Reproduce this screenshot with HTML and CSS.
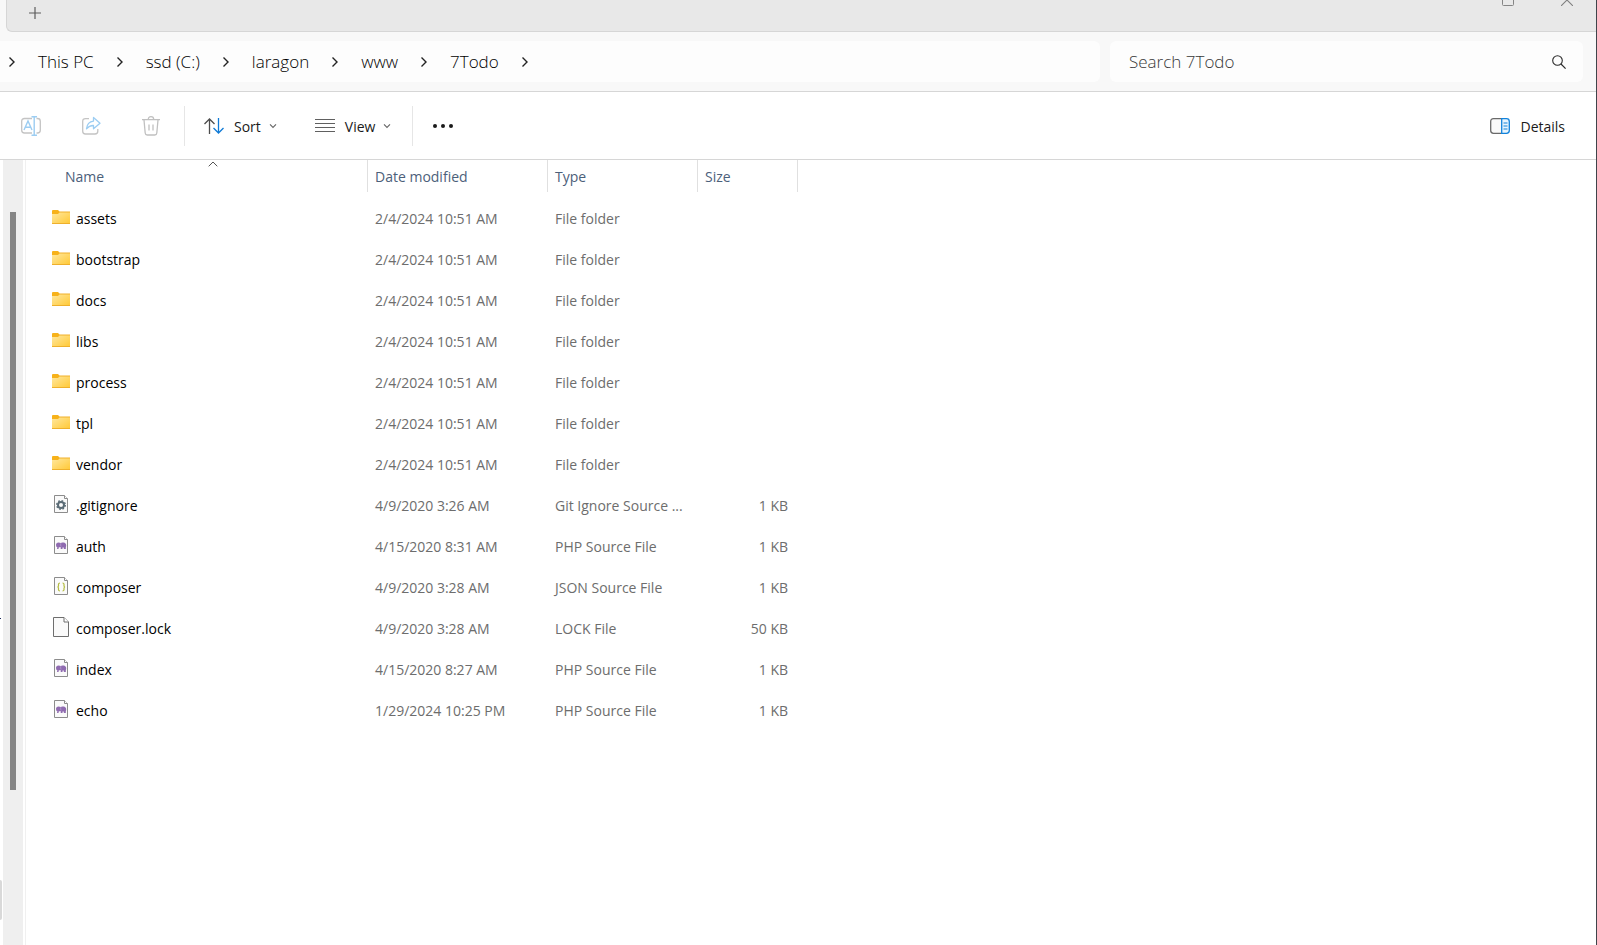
FILE: index.html
```html
<!DOCTYPE html>
<html lang="en">
<head>
<meta charset="utf-8">
<title>7Todo</title>
<link rel="stylesheet" href="styles.css">
</head>
<body>
<svg class="defs" aria-hidden="true">
  <defs>
    <linearGradient id="folder-fill" x1="0" y1="0" x2="1" y2="1">
      <stop offset="0" stop-color="#ffe8a0"/>
      <stop offset="1" stop-color="#ffc937"/>
    </linearGradient>
    <symbol id="chevron" viewBox="0 0 8 12"><path d="M1.5 1.5 6 6l-4.5 4.5" fill="none" stroke="#222" stroke-width="1.4"/></symbol>
    <symbol id="caret" viewBox="0 0 8 6"><path d="M1 1.3 4 4.4l3-3.1" fill="none" stroke="#666" stroke-width="1.1"/></symbol>
    <symbol id="folder" viewBox="0 0 20 20">
      <path d="M1 4q0-1 1-1h5l2 2v3H1z" fill="#f7b21a"/>
      <path d="M1 7h6l2-2h10v11.500H1z" fill="url(#folder-fill)"/>
      <path d="M8.500 5H19" stroke="#f0b02a"/>
      <path d="M1 16.500h18" stroke="#eeb02c"/>
    </symbol>
    <symbol id="page" viewBox="0 0 20 20">
      <path d="M3.500 1.500h10l3 3v14h-13z" fill="#fafafa" stroke="#8c8c8c"/>
      <path d="M13.500 1.500v3h3" fill="#fff" stroke="#8c8c8c"/>
    </symbol>
    <symbol id="blank" viewBox="0 0 20 20">
      <path d="M2.500.500h10.500l4.500 4.500v14.500h-15z" fill="#fafafa" stroke="#6e6e6e"/>
      <path d="M13 .500v4.500h4.500" fill="#fff" stroke="#6e6e6e"/>
    </symbol>
    <symbol id="git" viewBox="0 0 20 20">
      <use href="#page"/>
      <circle cx="10" cy="11" r="4.300" fill="none" stroke="#5a6b75" stroke-width="1.400" stroke-dasharray="1.700 1.677"/>
      <circle cx="10" cy="11" r="3" fill="none" stroke="#5a6b75" stroke-width="2"/>
    </symbol>
    <symbol id="php" viewBox="0 0 20 20">
      <use href="#page"/>
      <path d="M5 10q0-2.500 2.500-2.500 1.500 0 2.200.500 1-.800 2.800-.500 2.700.300 2.700 3 0 1-.400 1.500v2h-2v-1.500h-1.300v1.500H9.700v-2q-1 .500-1.900.200l-.300 1.800q-1.500.300-1.500-.800l.400-1Q5 12.200 5 10z" fill="#8f6bb0"/>
      <path d="M9.800 8.200q-.400 1.800.200 3.300" fill="none" stroke="#c3acd8" stroke-width=".6"/>
    </symbol>
    <symbol id="json" viewBox="0 0 20 20">
      <use href="#page"/>
      <path d="M9 7q-1.500 0-1.500 1.200v1.500q0 1.300-1.100 1.300 1.100 0 1.100 1.300v1.500Q7.500 15 9 15M11.500 7q1.500 0 1.500 1.200v1.500q0 1.300 1.100 1.300-1.100 0-1.100 1.300v1.500q0 1.200-1.500 1.200" fill="none" stroke="#b4bb40" stroke-width="1.200"/>
    </symbol>
  </defs>
</svg>

<div class="window">
  <header class="titlebar">
    <div class="tabstrip">
      <button class="tab-new" aria-label="New tab"><svg width="12" height="12" viewBox="0 0 12 12"><path d="M6 0v12M0 6h12" stroke="#5c5c5c" stroke-width="1.200"/></svg></button>
      <div class="caption">
        <button class="caption-button" aria-label="Maximize"><svg width="12" height="12" viewBox="0 0 12 12"><rect x=".5" y=".5" width="11" height="11" rx="1" fill="none" stroke="#858585"/></svg></button>
        <button class="caption-button" aria-label="Close"><svg width="12" height="12" viewBox="0 0 12 12"><path d="M0 0l12 12M12 0 0 12" stroke="#808080" stroke-width="1.100"/></svg></button>
      </div>
    </div>
  </header>

  <div class="addressbar">
    <nav class="breadcrumb" aria-label="Path">
      <svg class="chevron"><use href="#chevron"/></svg>
      <button class="crumb">This PC</button>
      <svg class="chevron"><use href="#chevron"/></svg>
      <button class="crumb">ssd (C:)</button>
      <svg class="chevron"><use href="#chevron"/></svg>
      <button class="crumb">laragon</button>
      <svg class="chevron"><use href="#chevron"/></svg>
      <button class="crumb">www</button>
      <svg class="chevron"><use href="#chevron"/></svg>
      <button class="crumb">7Todo</button>
      <svg class="chevron"><use href="#chevron"/></svg>
    </nav>
    <form class="search">
      <input class="search-input" type="text" placeholder="Search 7Todo" aria-label="Search 7Todo">
      <button class="search-button" type="button" aria-label="Search"><svg width="14" height="14" viewBox="0 0 14 14"><circle cx="5.500" cy="5.500" r="4.800" fill="none" stroke="#2b2b2b" stroke-width="1.100"/><path d="M9 9l4.600 4.600" stroke="#2b2b2b" stroke-width="1.200"/></svg></button>
    </form>
  </div>

  <div class="toolbar">
    <div class="tool-icons">
      <button class="tool" disabled aria-label="Rename"><svg width="20" height="20" viewBox="0 0 20 20" fill="none">
        <path d="M11 2.500H3.500Q.700 2.500.700 5.200v9.100q0 2.700 2.800 2.700H11M15.500 2.500h1q2.800 0 2.800 2.700v9.100q0 2.700-2.800 2.700h-1" stroke="#c4c4c4" stroke-width="1.300"/>
        <path d="M3 14 7 5l4 9M4.500 11.300h5" stroke="#9ccdf2" stroke-width="1.400"/>
        <path d="M13.200 1v18M10.500.700h5.500M10.500 19.300h5.500" stroke="#9ccdf2" stroke-width="1.400"/></svg></button>
      <button class="tool" disabled aria-label="Share"><svg width="20" height="20" viewBox="0 0 20 20" fill="none">
        <path d="M8 2.600H4.500Q1.700 2.600 1.700 5.400v9.800q0 2.800 2.800 2.800h9.500q2.800 0 2.800-2.800V13" stroke="#c4c4c4" stroke-width="1.300"/>
        <path d="M12.500 1.500 19 7.300l-6.500 5.500V9.500q-4-.200-7 3.300.7-7 7-7.700z" stroke="#9ccdf2" stroke-width="1.300" stroke-linejoin="round"/></svg></button>
      <button class="tool" disabled aria-label="Delete"><svg width="20" height="20" viewBox="0 0 20 20" fill="none" stroke="#c0c0c0" stroke-width="1.300">
        <path d="M1 3.700h18M7.300 3.500q0-2.800 2.700-2.800t2.700 2.800M3 4l1.200 13q.200 2 2 2h7.600q1.800 0 2-2L17 4M8 8.500v6M12 8.500v6"/></svg></button>
    </div>
    <div class="tool-menus">
      <button class="menu"><svg width="20" height="16" viewBox="0 0 20 16" fill="none">
        <path d="M5.500 16V1M.500 6l5-5 5 5" stroke="#4d4d4d" stroke-width="1.300"/>
        <path d="M14.500 0v15M9.500 10l5 5 5-5" stroke="#0f7ad6" stroke-width="1.300"/></svg><span class="menu-label">Sort</span><svg class="caret"><use href="#caret"/></svg></button>
      <button class="menu"><svg width="20" height="14" viewBox="0 0 20 14"><path d="M0 .500h20M0 4.500h20M0 8.500h20M0 12.500h20" stroke="#606060"/></svg><span class="menu-label">View</span><svg class="caret"><use href="#caret"/></svg></button>
    </div>
    <button class="more" aria-label="See more"><svg width="20" height="4" viewBox="0 0 20 4" fill="#1a1a1a"><circle cx="2" cy="2" r="2"/><circle cx="10" cy="2" r="2"/><circle cx="18" cy="2" r="2"/></svg></button>
    <button class="menu details"><svg width="20" height="16" viewBox="0 0 20 16" fill="none">
      <path d="M12 .700H3.500Q.700.700.700 3.500v9q0 2.800 2.800 2.800H12" fill="#fafafa" stroke="#6a6a6a" stroke-width="1.300"/>
      <path d="M11.700.700h4.800q2.800 0 2.800 2.800v9q0 2.800-2.800 2.800h-4.800z" fill="#e8f4fd" stroke="#1283dc" stroke-width="1.300"/>
      <path d="M13.500 5h4M13.500 8h4M13.500 11h4" stroke="#1283dc" stroke-width="1.200"/></svg><span class="menu-label">Details</span></button>
  </div>

  <main class="content">
    <aside class="navpane">
      <div class="nav-edge"><span class="nav-mark"></span><span class="nav-item"></span></div>
      <div class="scroll-track"><div class="scroll-thumb"></div></div>
    </aside>
    <table class="files">
      <colgroup><col class="col-name"><col class="col-date"><col class="col-type"><col class="col-size"></colgroup>
      <thead>
        <tr>
          <th scope="col"><div class="head head-name">Name<svg class="sort-mark" width="10" height="6" viewBox="0 0 10 6"><path d="M.700 5.300 5 1l4.300 4.300" fill="none" stroke="#555" stroke-width="1"/></svg></div></th>
          <th scope="col"><div class="head">Date modified</div></th>
          <th scope="col"><div class="head">Type</div></th>
          <th scope="col"><div class="head">Size</div></th>
        </tr>
      </thead>
      <tbody>
        <tr><td><div class="file"><svg class="icon"><use href="#folder"/></svg>assets</div></td><td>2/4/2024 10:51 AM</td><td>File folder</td><td></td></tr>
        <tr><td><div class="file"><svg class="icon"><use href="#folder"/></svg>bootstrap</div></td><td>2/4/2024 10:51 AM</td><td>File folder</td><td></td></tr>
        <tr><td><div class="file"><svg class="icon"><use href="#folder"/></svg>docs</div></td><td>2/4/2024 10:51 AM</td><td>File folder</td><td></td></tr>
        <tr><td><div class="file"><svg class="icon"><use href="#folder"/></svg>libs</div></td><td>2/4/2024 10:51 AM</td><td>File folder</td><td></td></tr>
        <tr><td><div class="file"><svg class="icon"><use href="#folder"/></svg>process</div></td><td>2/4/2024 10:51 AM</td><td>File folder</td><td></td></tr>
        <tr><td><div class="file"><svg class="icon"><use href="#folder"/></svg>tpl</div></td><td>2/4/2024 10:51 AM</td><td>File folder</td><td></td></tr>
        <tr><td><div class="file"><svg class="icon"><use href="#folder"/></svg>vendor</div></td><td>2/4/2024 10:51 AM</td><td>File folder</td><td></td></tr>
        <tr><td><div class="file"><svg class="icon"><use href="#git"/></svg>.gitignore</div></td><td>4/9/2020 3:26 AM</td><td>Git Ignore Source ...</td><td>1 KB</td></tr>
        <tr><td><div class="file"><svg class="icon"><use href="#php"/></svg>auth</div></td><td>4/15/2020 8:31 AM</td><td>PHP Source File</td><td>1 KB</td></tr>
        <tr><td><div class="file"><svg class="icon"><use href="#json"/></svg>composer</div></td><td>4/9/2020 3:28 AM</td><td>JSON Source File</td><td>1 KB</td></tr>
        <tr><td><div class="file"><svg class="icon"><use href="#blank"/></svg>composer.lock</div></td><td>4/9/2020 3:28 AM</td><td>LOCK File</td><td>50 KB</td></tr>
        <tr><td><div class="file"><svg class="icon"><use href="#php"/></svg>index</div></td><td>4/15/2020 8:27 AM</td><td>PHP Source File</td><td>1 KB</td></tr>
        <tr><td><div class="file"><svg class="icon"><use href="#php"/></svg>echo</div></td><td>1/29/2024 10:25 PM</td><td>PHP Source File</td><td>1 KB</td></tr>
      </tbody>
    </table>
  </main>
</div>
</body>
</html>
```

FILE: styles.css
```css
* { box-sizing: border-box; }

body {
  margin: 0;
  font-family: "Open Sans", "Noto Sans", sans-serif;
  font-size: 14px;
  line-height: 20px;
  color: #1a1a1a;
  background: #fff;
}

button {
  display: flex;
  align-items: center;
  padding: 0;
  border: 0;
  background: none;
  font: inherit;
  color: inherit;
}

svg { display: block; flex: none; }

.defs { position: absolute; width: 0; height: 0; }

.window {
  display: flex;
  flex-direction: column;
  min-height: 100vh;
  border-right: 1px solid #3f444a;
}

/* Title bar */
.titlebar { padding-left: 6px; background: #f8f8f8; }

.tabstrip {
  display: flex;
  align-items: flex-start;
  justify-content: space-between;
  height: 32px;
  padding: 0 23px 0 22px;
  overflow: hidden;
  background: #e8e8e8;
  border-left: 1px solid #d6d6d6;
  border-bottom: 1px solid #d6d6d6;
  border-bottom-left-radius: 6px;
}

.tab-new { height: 26px; }

.caption { display: flex; gap: 47px; margin-top: -6px; }

/* Address bar */
.addressbar {
  display: flex;
  gap: 10px;
  padding: 9px 13px 9px 0;
  background: #f8f8f8;
  border-bottom: 1px solid #d6d6d6;
  font-size: 17px;
  font-weight: 300;
}

.breadcrumb {
  display: flex;
  flex: 1 1 1100px;
  align-items: center;
  gap: 22px;
  height: 41px;
  padding-left: 8px;
  background: #fdfdfd;
  border-radius: 0 6px 6px 0;
}

.crumb { color: #000; }

.chevron { width: 8px; height: 12px; }

.search {
  display: flex;
  flex: 0 1 473px;
  align-items: center;
  padding: 0 17px 0 19px;
  background: #fdfdfd;
  border-radius: 6px;
}

.search-input {
  flex: 1;
  min-width: 0;
  padding: 0;
  border: 0;
  outline: 0;
  background: none;
  font: inherit;
  color: #1a1a1a;
}

.search-input::placeholder { color: #383838; opacity: 1; }

/* Command bar */
.toolbar {
  display: flex;
  align-items: center;
  height: 68px;
  padding: 0 31px 0 21px;
  border-bottom: 1px solid #d6d6d6;
}

.tool-icons { display: flex; gap: 40px; }

.tool-menus {
  display: flex;
  align-items: center;
  gap: 38px;
  height: 40px;
  margin-left: 23px;
  padding: 0 21px 0 19px;
  border-left: 1px solid #e6e6e6;
  border-right: 1px solid #e6e6e6;
}

.menu { gap: 8px; }

.menu-label { padding: 2px 0 0 2px; }

.caret { width: 8px; height: 6px; }

.more { margin-left: 20px; }

.details { margin-left: auto; }

/* Content */
.content { display: flex; flex: 1; align-items: stretch; }

.navpane {
  display: flex;
  flex: none;
  width: 26px;
  padding-right: 2px;
  border-right: 1px solid #f0f0f0;
}

.nav-edge {
  display: grid;
  grid-template-rows: 458px 1px 261fr 40px 25fr;
  width: 3px;
}

.nav-mark { grid-row: 2; width: 1px; background: #1b2a5c; }

.nav-item {
  grid-row: 4;
  width: 2px;
  background: #d9d9d9;
  border-radius: 0 2px 2px 0;
}

.scroll-track {
  display: grid;
  grid-template-rows: 52px 578fr 155fr;
  justify-content: center;
  width: 20px;
  padding-right: 1px;
  background: #efefef;
}

.scroll-thumb { grid-row: 2; width: 6px; background: #858585; }

.files {
  align-self: flex-start;
  width: 772px;
  table-layout: fixed;
  border-collapse: collapse;
  color: #6d6d6d;
}

.col-name { width: 342px; }
.col-date { width: 180px; }
.col-type { width: 150px; }
.col-size { width: 100px; }

.files th {
  padding: 0 0 6px;
  font-weight: 400;
  text-align: left;
  color: #4c607a;
}

.head {
  height: 32px;
  padding: 7px 0 0 7px;
  border-right: 1px solid #e0e0e0;
}

.head-name { position: relative; padding-left: 39px; }

.sort-mark { position: absolute; top: 1px; left: 182px; }

.files td { height: 41px; padding: 0 10px 0 7px; white-space: nowrap; }

.files td:first-child { padding-left: 25px; color: #000; }

.files td:last-child { text-align: right; }

.file { display: flex; align-items: center; gap: 5px; }

.icon { width: 20px; height: 20px; margin-bottom: 4px; }
```
